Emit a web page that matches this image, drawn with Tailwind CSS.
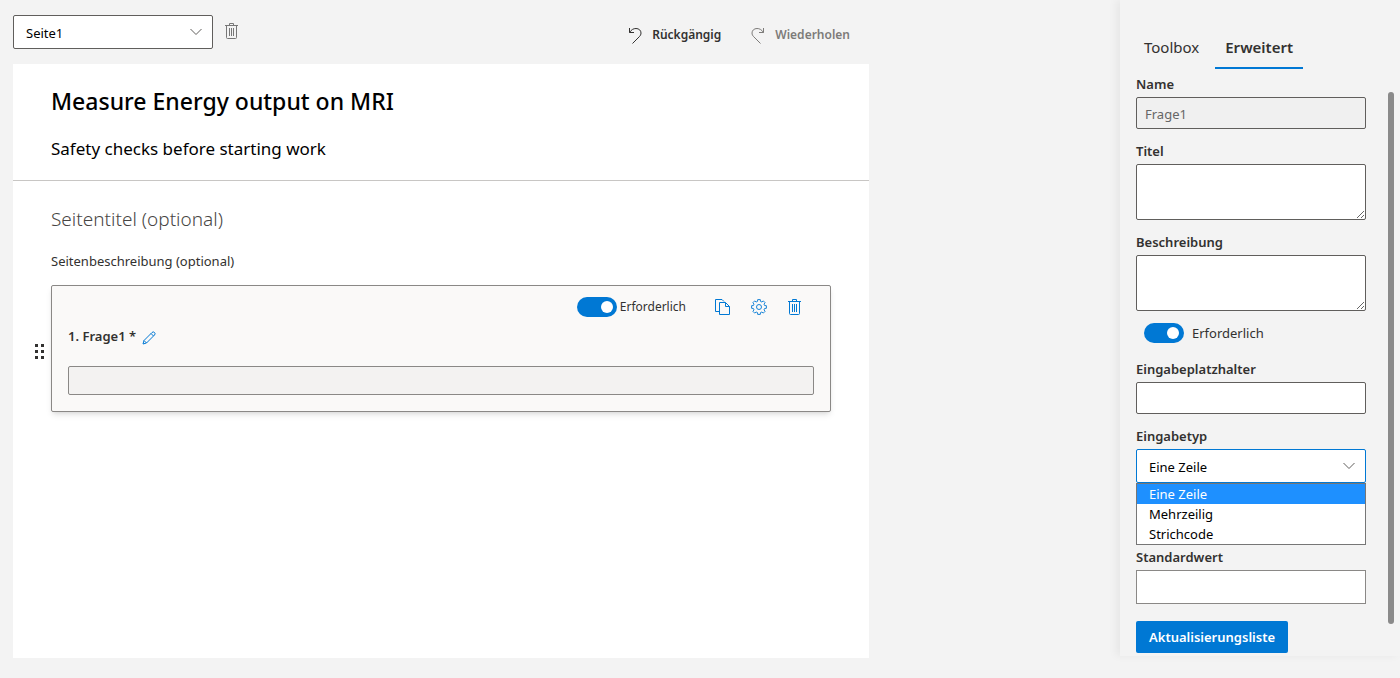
<!DOCTYPE html>
<html lang="de">

<head>
    <meta charset="UTF-8">
    <meta name="viewport" content="width=device-width, initial-scale=1">
    <title>Measure Energy output on MRI</title>
    <script src="https://cdn.jsdelivr.net/npm/@tailwindcss/browser@4"></script>
</head>

<body class="bg-[#f3f3f3] min-h-screen flex items-start justify-between gap-8 font-['Noto_Sans','Open_Sans',sans-serif] text-[13px] leading-5 text-[#323130]">

    <!-- Icons -->
    <svg class="hidden">
        <symbol id="icon-trash" viewBox="0 0 14 16" fill="none" stroke="currentColor">
            <path d="M0 2.5h13M4.5 2.5v-2h4v2M1.5 2.5v12a1 1 0 0 0 1 1h8a1 1 0 0 0 1-1v-12M4.5 5v8M6.5 5v8M8.5 5v8" />
        </symbol>
        <symbol id="icon-chevron" viewBox="0 0 12 8" fill="none" stroke="currentColor">
            <path d="M.5 1L6 6.5 11.5 1" />
        </symbol>
        <symbol id="icon-undo" viewBox="0 0 14 17" fill="none" stroke="currentColor">
            <path d="M1.5 1v4.5H6M1.5 5.5C3.5 2.5 5.5 1.5 8 1.5c3 0 5 2 5 4.5 0 1.5-.6 2.6-1.7 3.7L4.5 16.5" />
        </symbol>
    </svg>

    <main class="flex-1 max-w-[869px] pl-[13px] pt-[15px] pb-5">
        <div class="flex items-start justify-between pr-[19px]">
            <div class="flex items-start gap-3">
                <div class="relative">
                    <select id="page" aria-label="Seite" class="appearance-none w-[200px] h-[34px] pl-3 pr-8 pt-0.5 rounded-xs border border-[#605e5c] bg-white text-black">
                        <option>Seite1</option>
                    </select>
                    <svg class="absolute right-[11px] top-[13px] w-3 h-2 text-[#605e5c] pointer-events-none"><use href="#icon-chevron" /></svg>
                </div>
                <button type="button" aria-label="Seite löschen" class="pt-2 text-[#777]">
                    <svg class="w-[14px] h-4"><use href="#icon-trash" /></svg>
                </button>
            </div>
            <div class="flex gap-[30px] pt-[10px] text-xs leading-5 font-semibold">
                <button type="button" class="flex items-center gap-[10px]">
                    <svg class="w-[14px] h-[17px]"><use href="#icon-undo" /></svg>
                    Rückgängig
                </button>
                <button type="button" class="flex items-center gap-[10px] text-[#7d7b79]">
                    <svg class="w-[14px] h-[17px] -scale-x-100"><use href="#icon-undo" /></svg>
                    Wiederholen
                </button>
            </div>
        </div>

        <section class="mt-[15px] bg-white min-h-[594px]">
            <header class="h-[117px] px-[38px] pt-[21px] border-b border-[#c8c6c4] text-black">
                <h1 class="text-[23px] leading-8 font-medium">Measure Energy output on MRI</h1>
                <p class="mt-5 text-[17px] leading-6">Safety checks before starting work</p>
            </header>

            <div class="px-[38px] pt-6">
                <h2 class="text-[19px] leading-7 font-light text-[#484644]">Seitentitel (optional)</h2>
                <p class="mt-[18px]">Seitenbeschreibung (optional)</p>

                <div class="relative mt-[14px] h-[127px] px-4 rounded-xs border border-[#8a8886] bg-[#faf9f8] shadow-md">
                    <!-- Drag handle -->
                    <svg class="absolute -left-[17px] top-[58px] w-[10px] h-4" fill="#323130">
                        <path d="M0 0h3v3H0zM6 0h3v3H6zM0 6h3v3H0zM6 6h3v3H6zM0 12h3v3H0zM6 12h3v3H6z" />
                    </svg>
                    <div class="flex justify-end items-center h-[42px] pr-3">
                        <label class="flex items-center gap-[3px] mr-[29px] text-xs leading-5">
                            <input type="checkbox" role="switch" checked class="appearance-none w-10 h-5 rounded-full bg-[#0078d4] after:block after:size-3 after:mt-1 after:ml-6 after:rounded-full after:bg-white">
                            Erforderlich
                        </label>
                        <div class="flex gap-5 text-[#0078d4]">
                            <button type="button" aria-label="Kopieren">
                                <svg class="w-4 h-4" viewBox="0 0 16 16" fill="none" stroke="currentColor"><path d="M9 2.5L7 .5H.5v12H4M4.5 3.5h6l4 4v8h-10zM10.5 3.5v4h4" /></svg>
                            </button>
                            <button type="button" aria-label="Einstellungen" class="mr-px">
                                <svg class="w-4 h-4" viewBox="0 0 16 16" fill="none" stroke="currentColor" stroke-width="0.9"><circle cx="8" cy="8" r="2.5" /><path d="M6.5 2.4L6.7.6h2.6l.2 1.8 1.4.6 1.4-1.1 1.8 1.8L13 5.1l.6 1.4 1.8.2v2.6l-1.8.2-.6 1.4 1.100 1.400-1.800 1.800-1.400-1.100-1.400.6-.2 1.800H6.700l-.2-1.800-1.400-.6-1.400 1.100-1.800-1.800L3 10.900l-.6-1.400-1.800-.2V6.700l1.800-.2L3 5.100 1.900 3.700l1.800-1.800L5.100 3z" /></svg>
                            </button>
                            <button type="button" aria-label="Löschen">
                                <svg class="w-[14px] h-4"><use href="#icon-trash" /></svg>
                            </button>
                        </div>
                    </div>
                    <div class="flex items-center gap-[6px] h-4">
                        <label for="answer" class="font-semibold">1. Frage1 *</label>
                        <button type="button" aria-label="Bearbeiten" class="pt-[3px] text-[#0078d4]">
                            <svg class="w-[14px] h-[14px]" viewBox="0 0 14 14" fill="none" stroke="currentColor"><path d="M1 13l1-3.500L10 1.500a1.700 1.700 0 0 1 2.500 2.500L4.500 12zM9 2.500L11.500 5M2 9.500L4.500 12" /></svg>
                        </button>
                    </div>
                    <input id="answer" type="text" disabled class="block mt-[22px] w-full h-[29px] rounded-xs border border-[#8a8886] bg-[#f3f2f1]">
                </div>
            </div>
        </section>
    </main>

    <!-- Properties -->
    <aside class="relative w-[280px] shrink-0 h-[656px] pl-4 pr-[34px] shadow-[-4px_0_8px_rgba(0,0,0,0.05)]">
        <nav class="flex pt-[27px] text-[15px] leading-5">
            <button type="button" class="px-2 h-[42px] mr-2 border-b-2 border-transparent">Toolbox</button>
            <button type="button" class="px-[10px] h-[42px] border-b-2 border-[#0078d4] font-semibold">Erweitert</button>
        </nav>

        <form class="pt-[5px]">
            <label for="name" class="block font-semibold">Name</label>
            <input id="name" type="text" value="Frage1" disabled class="block mt-[3px] w-full h-8 px-2 pt-0.5 rounded-xs border border-[#605e5c] bg-[#f0f0f0] text-[#666]">

            <label for="title" class="block mt-3 font-semibold">Titel</label>
            <textarea id="title" class="block mt-[3px] w-full h-14 px-2 rounded-xs border border-[#605e5c] bg-white"></textarea>

            <label for="description" class="block mt-3 font-semibold">Beschreibung</label>
            <textarea id="description" class="block mt-[3px] w-full h-14 px-2 rounded-xs border border-[#605e5c] bg-white"></textarea>

            <label class="flex items-center gap-2 mt-3 ml-2">
                <input type="checkbox" role="switch" checked class="appearance-none w-10 h-5 rounded-full bg-[#0078d4] after:block after:size-3 after:mt-1 after:ml-[23px] after:rounded-full after:bg-white">
                Erforderlich
            </label>

            <label for="placeholder" class="block mt-4 font-semibold">Eingabeplatzhalter</label>
            <input id="placeholder" type="text" class="block mt-[3px] w-full h-8 px-2 rounded-xs border border-[#605e5c] bg-white">

            <label for="type" class="block mt-3 font-semibold">Eingabetyp</label>
            <div class="relative mt-[3px]">
                <select id="type" class="appearance-none block w-full h-[34px] pl-3 pr-8 pt-0.5 rounded-xs border border-[#0078d4] bg-white text-black">
                    <option>Eine Zeile</option>
                    <option>Mehrzeilig</option>
                    <option>Strichcode</option>
                </select>
                <svg class="absolute right-[11px] top-[13px] w-3 h-2 text-[#605e5c] pointer-events-none"><use href="#icon-chevron" /></svg>
                <ul role="listbox" class="absolute z-10 left-0 right-0 top-[34px] border border-[#767676] bg-white text-black">
                    <li role="option" aria-selected="true" class="px-3 h-5 bg-[#1e90ff] text-white">Eine Zeile</li>
                    <li role="option" class="px-3 h-5">Mehrzeilig</li>
                    <li role="option" class="px-3 h-5">Strichcode</li>
                </ul>
            </div>

            <label for="default" class="block mt-16 font-semibold">Standardwert</label>
            <input id="default" type="text" class="block mt-[3px] w-full h-[34px] px-2 border border-[#8a8886] bg-white">

            <button type="button" class="mt-[17px] h-8 px-[13px] rounded-xs bg-[#0078d4] text-white font-semibold">Aktualisierungsliste</button>
        </form>

        <div class="absolute right-[6px] top-[92px] w-[6px] h-[532px] rounded-full bg-[#8a8a8a]"></div>
    </aside>
</body>

</html>
